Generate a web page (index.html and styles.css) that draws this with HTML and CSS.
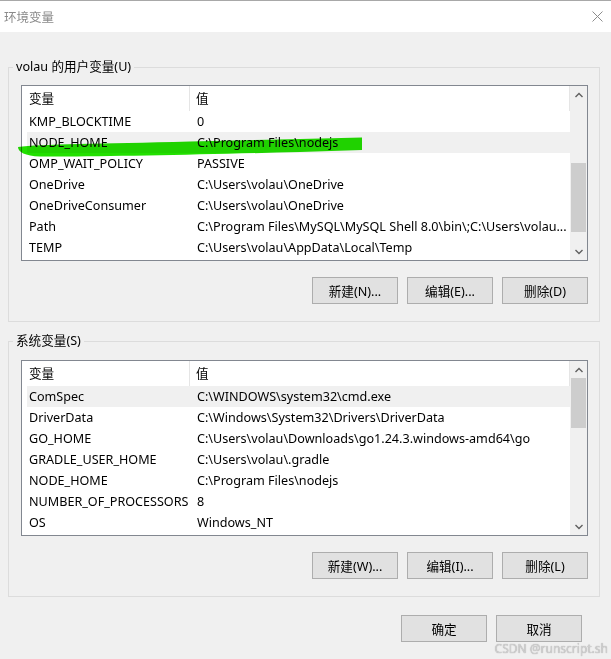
FILE: index.html
```html
<!DOCTYPE html>
<html lang="zh-CN">
<head>
<meta charset="utf-8">
<title>环境变量</title>
<link rel="stylesheet" href="styles.css">
</head>
<body>
<div class="window">
  <div class="titlebar">
    <span class="title">环境变量</span>
    <svg class="close" width="11" height="11" viewBox="0 0 11 11"><path d="M0.5 0.5 L10.5 10.5 M10.5 0.5 L0.5 10.5" stroke="#8c8c8c" stroke-width="1" fill="none"/></svg>
  </div>
  <div class="content">
    <fieldset class="group group-user">
      <legend>volau 的用户变量(U)</legend>
      <div class="list">
        <div class="list-main">
          <div class="list-head"><div class="hc">变量</div><div class="hc">值</div></div>
          <div class="row"><span>KMP_BLOCKTIME</span><span>0</span></div>
          <div class="row hl"><span>NODE_HOME</span><span>C:\Program Files\nodejs</span></div>
          <div class="row"><span>OMP_WAIT_POLICY</span><span>PASSIVE</span></div>
          <div class="row"><span>OneDrive</span><span>C:\Users\volau\OneDrive</span></div>
          <div class="row"><span>OneDriveConsumer</span><span>C:\Users\volau\OneDrive</span></div>
          <div class="row"><span>Path</span><span>C:\Program Files\MySQL\MySQL Shell 8.0\bin\;C:\Users\volau...</span></div>
          <div class="row"><span>TEMP</span><span>C:\Users\volau\AppData\Local\Temp</span></div>
        </div>
        <div class="scrollbar">
          <div class="sb-btn"><svg width="8" height="6" viewBox="0 0 8 6"><polyline points="0.5,5 4,1.5 7.5,5" fill="none" stroke="#606060" stroke-width="1.4"/></svg></div>
          <div class="sb-track"><div class="sb-thumb" style="margin-top:60px;height:69px"></div></div>
          <div class="sb-btn"><svg width="8" height="6" viewBox="0 0 8 6"><polyline points="0.5,1 4,4.5 7.5,1" fill="none" stroke="#606060" stroke-width="1.4"/></svg></div>
        </div>
      </div>
      <div class="btns">
        <button class="btn">新建(N)...</button>
        <button class="btn">编辑(E)...</button>
        <button class="btn">删除(D)</button>
      </div>
    </fieldset>

    <fieldset class="group group-sys">
      <legend>系统变量(S)</legend>
      <div class="list">
        <div class="list-main">
          <div class="list-head"><div class="hc">变量</div><div class="hc">值</div></div>
          <div class="row hl"><span>ComSpec</span><span>C:\WINDOWS\system32\cmd.exe</span></div>
          <div class="row"><span>DriverData</span><span>C:\Windows\System32\Drivers\DriverData</span></div>
          <div class="row"><span>GO_HOME</span><span>C:\Users\volau\Downloads\go1.24.3.windows-amd64\go</span></div>
          <div class="row"><span>GRADLE_USER_HOME</span><span>C:\Users\volau\.gradle</span></div>
          <div class="row"><span>NODE_HOME</span><span>C:\Program Files\nodejs</span></div>
          <div class="row"><span>NUMBER_OF_PROCESSORS</span><span>8</span></div>
          <div class="row"><span>OS</span><span>Windows_NT</span></div>
        </div>
        <div class="scrollbar">
          <div class="sb-btn"><svg width="8" height="6" viewBox="0 0 8 6"><polyline points="0.5,5 4,1.5 7.5,5" fill="none" stroke="#606060" stroke-width="1.4"/></svg></div>
          <div class="sb-track"><div class="sb-thumb" style="margin-top:0px;height:50px"></div></div>
          <div class="sb-btn"><svg width="8" height="6" viewBox="0 0 8 6"><polyline points="0.5,1 4,4.5 7.5,1" fill="none" stroke="#606060" stroke-width="1.4"/></svg></div>
        </div>
      </div>
      <div class="btns">
        <button class="btn">新建(W)...</button>
        <button class="btn">编辑(I)...</button>
        <button class="btn">删除(L)</button>
      </div>
    </fieldset>

    <div class="dlg-btns">
      <button class="btn">确定</button>
      <button class="btn">取消</button>
    </div>
  </div>

  <svg class="marker" width="611" height="659" viewBox="0 0 611 659">
    <path d="M18,147 C40,144 100,144 190,141.5 L300,139 L362,137.5 L362,150 L300,152 C200,154.5 100,157 40,156.5 C25,156 18,152 18,147 Z" fill="#22e000"/>
  </svg>
  <div class="watermark">CSDN @runscript.sh</div>
</div>
</body>
</html>
```

FILE: styles.css
```css
* { box-sizing: border-box; }

html, body {
  margin: 0;
  padding: 0;
  background: #f0f0f0;
}

body {
  font-family: "Noto Sans", "Noto Sans CJK SC", sans-serif;
  font-size: 12.6px;
  color: #000;
}

.window {
  position: relative;
  width: 611px;
  height: 659px;
  background: #f0f0f0;
  overflow: hidden;
}

.titlebar {
  height: 32px;
  border-top: 1px solid #a8a8a8;
  background: #fff;
  display: flex;
  align-items: center;
  justify-content: space-between;
  padding: 0 8px 0 4px;
}

.title {
  color: #8a8a8a;
  font-size: 12.5px;
}

.content {
  padding: 27px 11px 0 8px;
}

.group {
  margin: 0;
  min-width: 0;
  border: 1px solid #dcdcdc;
  padding: 10px 11px 17px 12px;
}

.group-sys {
  margin-top: 11px;
  padding-top: 11px;
}

.group legend {
  line-height: 16px;
  padding: 0 3px;
  margin-left: -8px;
}

.list {
  display: flex;
  height: 176px;
  border: 1px solid #828790;
  background: #fff;
}

.list-main {
  flex: 1;
  min-width: 0;
  overflow: hidden;
}

.list-head {
  display: grid;
  grid-template-columns: 168px 1fr;
  height: 25px;
  line-height: 25px;
  border-right: 1px solid #e5e5e5;
}

.hc:first-child {
  padding-left: 7px;
  border-right: 1px solid #e5e5e5;
}

.hc + .hc {
  padding-left: 6px;
}

.row {
  display: grid;
  grid-template-columns: 168px 1fr;
  height: 21px;
  line-height: 21px;
  margin-left: 5px;
  white-space: nowrap;
}

.row span {
  padding-left: 2px;
  overflow: hidden;
}

.row.hl {
  background: #f0f0f0;
}

.scrollbar {
  width: 17px;
  background: #f0f0f0;
  display: flex;
  flex-direction: column;
}

.sb-btn {
  height: 17px;
  display: flex;
  align-items: center;
  justify-content: center;
}

.sb-track {
  flex: 1;
}

.sb-thumb {
  margin-left: 1px;
  margin-right: 1px;
  background: #cdcdcd;
}

.btns {
  display: flex;
  justify-content: flex-end;
  gap: 9px;
  margin-top: 16px;
}

.btn {
  width: 86px;
  height: 27px;
  padding: 0;
  background: #e1e1e1;
  border: 1px solid #adadad;
  font: inherit;
  color: #000;
}

.dlg-btns {
  display: flex;
  justify-content: flex-end;
  gap: 9px;
  margin-top: 18px;
  padding-right: 18px;
}

.marker {
  position: absolute;
  left: 0;
  top: 0;
  pointer-events: none;
  mix-blend-mode: multiply;
}

.watermark {
  position: absolute;
  right: 3px;
  bottom: 2px;
  font-size: 12px;
  color: #cfcfcf;
  text-shadow: 0 0 1px #9a9a9a;
}
```
